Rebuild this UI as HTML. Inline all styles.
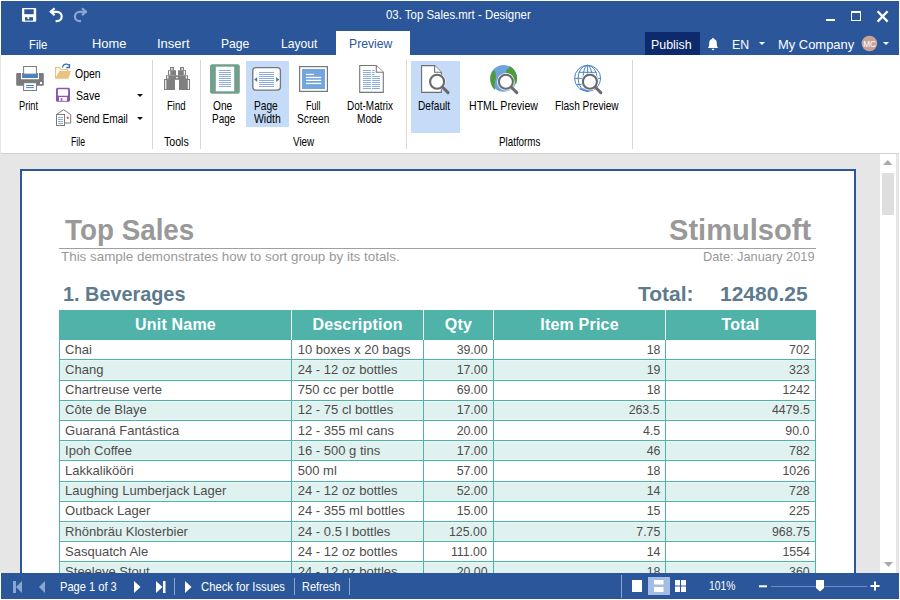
<!DOCTYPE html>
<html><head><meta charset="utf-8">
<style>
*{margin:0;padding:0;box-sizing:border-box}
html,body{width:900px;height:600px;overflow:hidden;background:#fff;font-family:"Liberation Sans",sans-serif;position:relative}
.a{position:absolute}
.tx{position:absolute;white-space:nowrap;transform-origin:0 0;display:inline-block}
svg{position:absolute;overflow:visible}
</style></head><body>
<!-- header -->
<div class="a" style="left:1px;top:1px;width:898px;height:54px;background:#2b579a"></div>
<div class="a" style="left:336px;top:31px;width:74px;height:25px;background:#fff"></div>
<div class="a" style="left:645px;top:32px;width:55px;height:23px;background:#0c2a6c"></div>
<!-- quick access -->
<svg style="left:0;top:0" width="900" height="30">
 <rect x="22" y="8" width="14.2" height="13.8" rx="1" fill="#fff"/>
 <rect x="24.3" y="9.3" width="9.4" height="4.9" fill="#2b579a"/>
 <rect x="25" y="17.2" width="8" height="3.4" fill="#2b579a"/>
 <rect x="27.4" y="17.2" width="1.8" height="1.9" fill="#fff"/>
 <path d="M50.2 11.8H57A4.7 4.7 0 0 1 57 21.2H55.6" fill="none" stroke="#fff" stroke-width="2.2"/>
 <path d="M54.6 8.3L50.8 11.8L54.6 15.3" fill="none" stroke="#fff" stroke-width="2.2"/>
 <path d="M86.8 11.8H79.6A4.7 4.7 0 0 0 79.6 21.2H81" fill="none" stroke="#8ba6d0" stroke-width="2.2"/>
 <path d="M82 8.3L85.8 11.8L82 15.3" fill="none" stroke="#8ba6d0" stroke-width="2.2"/>
 <!-- window controls -->
 <rect x="826" y="19" width="9" height="2" fill="#fff"/>
 <rect x="851.5" y="11.5" width="9" height="9" fill="none" stroke="#fff" stroke-width="1"/>
 <rect x="851" y="11" width="10" height="2" fill="#fff"/>
 <path d="M877.6 11.2l10 10.4M887.6 11.2l-10 10.4" stroke="#fff" stroke-width="2.3"/>
</svg>
<!-- tab row right icons -->
<svg style="left:0;top:0" width="900" height="60">
 <path d="M707.9 47.9H718.1C716.9 46.6 716.8 45 716.8 43.2C716.8 40.6 715.6 39.2 714 38.9L713.6 37.9H712.4L712 38.9C710.4 39.2 709.2 40.6 709.2 43.2C709.2 45 709.1 46.6 707.9 47.9Z" fill="#fff"/>
 <rect x="711.9" y="48.8" width="2.2" height="1.3" fill="#fff"/>
 <path d="M759 42h6l-3 3z" fill="#fff"/>
 <circle cx="869.4" cy="43.5" r="7.8" fill="#c8a298"/>
 <text x="869.6" y="46.9" font-size="8.3" fill="#fff" text-anchor="middle" font-family="Liberation Sans">MC</text>
 <path d="M883 42h6l-3 3z" fill="#fff"/>
</svg>
<!-- ribbon -->
<div class="a" style="left:0px;top:55px;width:1px;height:518px;background:#e6e6e6"></div>
<div class="a" style="left:1px;top:55px;width:898px;height:99px;background:#fff;border-bottom:1px solid #d2d2d2"></div>
<div class="a" style="left:152px;top:60px;width:1px;height:89px;background:#d8d8d8"></div>
<div class="a" style="left:200px;top:60px;width:1px;height:89px;background:#d8d8d8"></div>
<div class="a" style="left:406px;top:60px;width:1px;height:89px;background:#d8d8d8"></div>
<div class="a" style="left:632px;top:60px;width:1px;height:89px;background:#d8d8d8"></div>
<div class="a" style="left:246px;top:61px;width:43px;height:66px;background:#c5dbf7"></div>
<div class="a" style="left:411px;top:61px;width:49px;height:72px;background:#c5dbf7"></div>
<svg style="left:0;top:0" width="900" height="160">
 <!-- print -->
 <path d="M17.2 73h3.8v6.2h18v-6.2h3.8a1 1 0 0 1 1 1v10.8a1 1 0 0 1-1 1h-25.6a1 1 0 0 1-1-1v-10.8a1 1 0 0 1 1-1z" fill="#7b7b7b"/>
 <rect x="22.1" y="73" width="15.8" height="5" fill="#4a80c4"/>
 <rect x="23.6" y="66.5" width="12.8" height="7.6" fill="#fff" stroke="#7b7b7b"/>
 <rect x="40" y="82" width="2" height="2" fill="#fff"/>
 <rect x="23.6" y="82.7" width="12.8" height="7.8" fill="#fff" stroke="#7b7b7b"/>
 <rect x="26.1" y="85" width="7.8" height="1" fill="#4a80c4"/>
 <rect x="26.1" y="87.1" width="7.8" height="1" fill="#4a80c4"/>
 <!-- open folder -->
 <path d="M55.6 78.6v-11h4l1.6 1.9h6.4v2" fill="#fff" stroke="#e8c27f" stroke-width="1.1"/>
 <path d="M59.2 71h11.8l-2.6 7.8h-13.2z" fill="#ebc37f"/>
 <path d="M62.4 67.6c0.5-2.5 2.5-3.6 4.3-3.4 1 .1 1.8.6 2.3 1.2" fill="none" stroke="#2f6db5" stroke-width="1.2"/>
 <path d="M69.5 64v3.5h-3.2" fill="none" stroke="#2f6db5" stroke-width="1.3"/>
 <!-- save purple -->
 <rect x="56" y="87.8" width="14" height="14" rx="1.6" fill="#8b55b2"/>
 <rect x="57.9" y="89.2" width="10.2" height="6.5" rx="0.8" fill="#fff"/>
 <rect x="59" y="97" width="8" height="3.8" fill="#fff"/>
 <rect x="60.8" y="98.1" width="1.5" height="2.7" fill="#8b55b2"/>
 <path d="M137 94h6l-3 3z" fill="#111"/>
 <path d="M137 117h6l-3 3z" fill="#111"/>
 <!-- send email -->
 <path d="M56.5 114.5l7-4.8 7.2 4.8v8.5h-14.2z" fill="#fff" stroke="#7b7b7b"/>
 <rect x="56.5" y="114.5" width="8" height="11" fill="#fff" stroke="#7b7b7b"/>
 <g fill="#8fb0dc"><rect x="58" y="117" width="5" height="1"/><rect x="58" y="119" width="5" height="1"/><rect x="58" y="121" width="5" height="1"/><rect x="58" y="123" width="5" height="1"/></g>
 <rect x="66.8" y="116.8" width="1.8" height="2" fill="#e0402a"/>
 <!-- binoculars -->
 <g fill="#808080">
  <rect x="170" y="67" width="4" height="3.3"/><rect x="168" y="70.2" width="8" height="5.2"/><rect x="166" y="75.3" width="10" height="3.8"/><rect x="164" y="79" width="11" height="11"/>
  <rect x="175" y="75.3" width="4.2" height="4.5"/>
  <rect x="180" y="67" width="4" height="3.3"/><rect x="178" y="70.2" width="8" height="5.2"/><rect x="178" y="75.3" width="10" height="3.8"/><rect x="179" y="79" width="11" height="11"/>
 </g>
 <g fill="#fff">
  <rect x="171.3" y="68" width="1.2" height="2"/><rect x="169.2" y="71" width="1.1" height="3.8"/><rect x="167.2" y="76" width="1.1" height="2.6"/><rect x="165.2" y="80" width="1.1" height="9"/>
  <rect x="176" y="77.2" width="2" height="1"/>
  <rect x="181.6" y="68" width="1.2" height="2"/><rect x="183.8" y="71" width="1.1" height="3.8"/><rect x="185.8" y="76" width="1.1" height="2.6"/><rect x="187.8" y="80" width="1.1" height="9"/>
 </g>
 <!-- one page -->
 <rect x="210" y="64.2" width="29.8" height="29.6" rx="2" fill="#72a08d"/>
 <rect x="215.8" y="66.7" width="18.4" height="24.6" fill="#fff"/>
 <g fill="#8aaed9"><rect x="219" y="70" width="12" height="1"/><rect x="219" y="72" width="12" height="1"/><rect x="219" y="74" width="12" height="1"/><rect x="219" y="76" width="12" height="1"/><rect x="219" y="78" width="12" height="1"/><rect x="219" y="80" width="12" height="1"/><rect x="219" y="82" width="12" height="1"/><rect x="219" y="84" width="12" height="1"/><rect x="219" y="86" width="12" height="1"/></g>
 <!-- page width -->
 <rect x="252.8" y="67.6" width="27.6" height="22.5" rx="3" fill="#fff" stroke="#777" stroke-width="1.3"/>
 <g fill="#8aaed9"><rect x="259" y="72" width="15" height="1"/><rect x="259" y="74" width="15" height="1"/><rect x="259" y="76" width="15" height="1"/><rect x="259" y="78" width="15" height="1"/><rect x="259" y="80" width="15" height="1"/><rect x="259" y="82" width="15" height="1"/><rect x="259" y="84" width="15" height="1"/><rect x="259" y="86" width="15" height="1"/></g>
 <path d="M254.2 79.6l3-2.4v4.8z" fill="#3a75bb"/><path d="M279.2 79.6l-3-2.4v4.8z" fill="#3a75bb"/>
 <!-- full screen -->
 <rect x="299.6" y="66.6" width="27.8" height="24.8" fill="#fff" stroke="#777" stroke-width="1.2"/>
 <rect x="302" y="69" width="23" height="20" fill="#74a5dc"/>
 <g fill="#fff"><rect x="306" y="73.8" width="8" height="1.3"/><rect x="306" y="76.8" width="15.2" height="1.3"/><rect x="306" y="79.7" width="15.2" height="1.3"/><rect x="306" y="82.8" width="15.2" height="1.3"/></g>
 <!-- dot matrix -->
 <path d="M359.7 65.5h16.6l7 6.7v20.2h-23.6z" fill="#fff" stroke="#777" stroke-width="1.1"/>
 <path d="M376.3 65.5v6.7h7" fill="#fff" stroke="#777" stroke-width="1.1"/>
 <g fill="#8aaed9">
  <rect x="363" y="70" width="8" height="1"/><rect x="363" y="72" width="8" height="1"/><rect x="363" y="74" width="8" height="1"/><rect x="363" y="76" width="8" height="1"/><rect x="363" y="78" width="8" height="1"/><rect x="363" y="80" width="8" height="1"/><rect x="363" y="82" width="8" height="1"/><rect x="363" y="84" width="8" height="1"/><rect x="363" y="86" width="8" height="1"/><rect x="363" y="88" width="8" height="1"/>
  <rect x="372" y="70" width="2.5" height="1"/><rect x="372" y="72" width="2.5" height="1"/><rect x="372" y="74" width="2.5" height="1"/><rect x="372" y="76" width="8" height="1"/><rect x="372" y="78" width="8" height="1"/><rect x="372" y="80" width="8" height="1"/><rect x="372" y="82" width="8" height="1"/><rect x="372" y="84" width="8" height="1"/><rect x="372" y="86" width="8" height="1"/><rect x="372" y="88" width="8" height="1"/>
 </g>
 <!-- default -->
 <path d="M421.6 65.6h13l6.7 6.7v20.1h-19.7z" fill="#fff" stroke="#6e6e6e" stroke-width="1.1"/>
 <path d="M434.6 65.6v6.7h6.7" fill="#fff" stroke="#6e6e6e" stroke-width="1.1"/>
 <circle cx="437.1" cy="81.8" r="8.6" fill="#fff"/>
 <circle cx="437.1" cy="81.8" r="7" fill="#fff" stroke="#6a6a6a" stroke-width="2.1"/>
 <path d="M442.6 87.3l5.4 5.3" stroke="#6a6a6a" stroke-width="3" stroke-linecap="round"/>
 <!-- html preview -->
 <circle cx="503.6" cy="78.3" r="13.4" fill="#6ea4dc"/>
 <path d="M493.5 70 C491 73 490.2 77 490.3 80 C490.8 85 492.5 88 495 90 C495.5 87 494 85 495 82 C496 79 496.5 75 495 71.5z" fill="#4f9b3b"/>
 <path d="M509.5 66.2 C512.5 67.5 515.5 70.5 517 76 C517.2 80 516.8 82 516 84 C514 82 511 80.5 509 79.5 C507.5 77 509 74 506.5 73 C506 71 506 69.5 507.5 69 C509 68.5 509.8 67.5 509.5 66.2z" fill="#4f9b3b"/>
 <circle cx="505.9" cy="81.8" r="8.8" fill="#fff"/>
 <circle cx="505.9" cy="81.8" r="7" fill="#fff" stroke="#6a6a6a" stroke-width="2.1"/>
 <path d="M511.4 87.3l5.4 5.3" stroke="#6a6a6a" stroke-width="3" stroke-linecap="round"/>
 <!-- flash preview -->
 <g fill="none" stroke="#4a84c4" stroke-width="1">
 <circle cx="587.6" cy="78.3" r="13"/>
 <ellipse cx="587.6" cy="78.3" rx="4.5" ry="13"/>
 <ellipse cx="587.6" cy="78.3" rx="9.5" ry="13"/>
 <path d="M587.6 65.3v26M574.6 78.3h26M578.5 72.3h18.2M576.5 84.4h22M580 89.1h15"/>
 </g>
 <circle cx="589.9" cy="81.8" r="8.8" fill="#fff"/>
 <circle cx="589.9" cy="81.8" r="7" fill="#fff" stroke="#6a6a6a" stroke-width="2.1"/>
 <path d="M595.4 87.3l5.4 5.3" stroke="#6a6a6a" stroke-width="3" stroke-linecap="round"/>
</svg>
<!-- gray area -->
<div class="a" style="left:1px;top:154px;width:898px;height:419px;background:#e6e6e6"></div>
<!-- scrollbar -->
<div class="a" style="left:880px;top:154px;width:16px;height:419px;background:#fff"></div>
<div class="a" style="left:882px;top:173px;width:12px;height:42px;background:#dedede"></div>
<svg style="left:0;top:0" width="900" height="600">
 <path d="M883 165h9.5l-4.75-5z" fill="#aaa"/>
 <path d="M884 562h9l-4.5 5z" fill="#aaa"/>
</svg>
<!-- page -->
<div class="a" style="left:20px;top:169px;width:836px;height:420px;background:#fff;border:2px solid #2b579a;border-bottom:none"></div>
<div class="a" style="left:59px;top:248px;width:757px;height:1px;background:#a0a0a0"></div>
<div class="a" style="left:59px;top:310px;width:757px;height:30px;background:#4fb3a9"></div>
<div class="a" style="left:291px;top:310px;width:1px;height:30px;background:#fff"></div>
<div class="a" style="left:423px;top:310px;width:1px;height:30px;background:#fff"></div>
<div class="a" style="left:493px;top:310px;width:1px;height:30px;background:#fff"></div>
<div class="a" style="left:665px;top:310px;width:1px;height:30px;background:#fff"></div>
<div class="a" style="left:60px;width:231px;top:316.50px;font-size:16px;line-height:16px;font-weight:bold;color:#fff;text-align:center;white-space:nowrap;letter-spacing:0.2px">Unit Name</div>
<div class="a" style="left:292px;width:131px;top:316.50px;font-size:16px;line-height:16px;font-weight:bold;color:#fff;text-align:center;white-space:nowrap;letter-spacing:0.2px">Description</div>
<div class="a" style="left:424px;width:69px;top:316.50px;font-size:16px;line-height:16px;font-weight:bold;color:#fff;text-align:center;white-space:nowrap;letter-spacing:0.2px">Qty</div>
<div class="a" style="left:494px;width:171px;top:316.50px;font-size:16px;line-height:16px;font-weight:bold;color:#fff;text-align:center;white-space:nowrap;letter-spacing:0.2px">Item Price</div>
<div class="a" style="left:666px;width:149px;top:316.50px;font-size:16px;line-height:16px;font-weight:bold;color:#fff;text-align:center;white-space:nowrap;letter-spacing:0.2px">Total</div>
<div class="a" style="left:59px;top:340px;width:757px;height:20px;background:#fff;border-bottom:1px solid #4fb3a9"></div>
<div class="a" style="left:59px;top:360px;width:757px;height:21px;background:#e0f2f0;border-bottom:1px solid #4fb3a9"></div>
<div class="a" style="left:59px;top:360px;width:757px;height:1px;background:#eaf6f5"></div>
<div class="a" style="left:59px;top:379px;width:757px;height:1px;background:#eaf6f5"></div>
<div class="a" style="left:59px;top:381px;width:757px;height:20px;background:#fff;border-bottom:1px solid #4fb3a9"></div>
<div class="a" style="left:59px;top:401px;width:757px;height:20px;background:#e0f2f0;border-bottom:1px solid #4fb3a9"></div>
<div class="a" style="left:59px;top:401px;width:757px;height:1px;background:#eaf6f5"></div>
<div class="a" style="left:59px;top:419px;width:757px;height:1px;background:#eaf6f5"></div>
<div class="a" style="left:59px;top:421px;width:757px;height:20px;background:#fff;border-bottom:1px solid #4fb3a9"></div>
<div class="a" style="left:59px;top:441px;width:757px;height:20px;background:#e0f2f0;border-bottom:1px solid #4fb3a9"></div>
<div class="a" style="left:59px;top:441px;width:757px;height:1px;background:#eaf6f5"></div>
<div class="a" style="left:59px;top:459px;width:757px;height:1px;background:#eaf6f5"></div>
<div class="a" style="left:59px;top:461px;width:757px;height:21px;background:#fff;border-bottom:1px solid #4fb3a9"></div>
<div class="a" style="left:59px;top:482px;width:757px;height:20px;background:#e0f2f0;border-bottom:1px solid #4fb3a9"></div>
<div class="a" style="left:59px;top:482px;width:757px;height:1px;background:#eaf6f5"></div>
<div class="a" style="left:59px;top:500px;width:757px;height:1px;background:#eaf6f5"></div>
<div class="a" style="left:59px;top:502px;width:757px;height:20px;background:#fff;border-bottom:1px solid #4fb3a9"></div>
<div class="a" style="left:59px;top:522px;width:757px;height:20px;background:#e0f2f0;border-bottom:1px solid #4fb3a9"></div>
<div class="a" style="left:59px;top:522px;width:757px;height:1px;background:#eaf6f5"></div>
<div class="a" style="left:59px;top:540px;width:757px;height:1px;background:#eaf6f5"></div>
<div class="a" style="left:59px;top:542px;width:757px;height:20px;background:#fff;border-bottom:1px solid #4fb3a9"></div>
<div class="a" style="left:59px;top:562px;width:757px;height:20px;background:#e0f2f0;border-bottom:1px solid #4fb3a9"></div>
<div class="a" style="left:59px;top:562px;width:757px;height:1px;background:#eaf6f5"></div>
<div class="a" style="left:59px;top:580px;width:757px;height:1px;background:#eaf6f5"></div>
<div class="a" style="left:59px;top:340px;width:1px;height:240px;background:#4fb3a9"></div>
<div class="a" style="left:291px;top:340px;width:1px;height:240px;background:#4fb3a9"></div>
<div class="a" style="left:423px;top:340px;width:1px;height:240px;background:#4fb3a9"></div>
<div class="a" style="left:493px;top:340px;width:1px;height:240px;background:#4fb3a9"></div>
<div class="a" style="left:665px;top:340px;width:1px;height:240px;background:#4fb3a9"></div>
<div class="a" style="left:815px;top:340px;width:1px;height:240px;background:#4fb3a9"></div>
<div class="a" style="left:65.1px;top:342.70px;font-size:13px;line-height:13px;color:#4d4d4d;white-space:nowrap">Chai</div>
<div class="a" style="left:297.8px;top:342.70px;font-size:13px;line-height:13px;color:#4d4d4d;white-space:nowrap">10 boxes x 20 bags</div>
<div class="a" style="left:287.1px;width:200px;text-align:right;top:342.70px;font-size:13px;line-height:13px;color:#4d4d4d;white-space:nowrap"><span style="display:inline-block;transform:scaleX(0.95);transform-origin:100% 0">39.00</span></div>
<div class="a" style="left:460.0px;width:200px;text-align:right;top:342.70px;font-size:13px;line-height:13px;color:#4d4d4d;white-space:nowrap"><span style="display:inline-block;transform:scaleX(0.95);transform-origin:100% 0">18</span></div>
<div class="a" style="left:609.5px;width:200px;text-align:right;top:342.70px;font-size:13px;line-height:13px;color:#4d4d4d;white-space:nowrap"><span style="display:inline-block;transform:scaleX(0.95);transform-origin:100% 0">702</span></div>
<div class="a" style="left:65.1px;top:362.90px;font-size:13px;line-height:13px;color:#4d4d4d;white-space:nowrap">Chang</div>
<div class="a" style="left:297.8px;top:362.90px;font-size:13px;line-height:13px;color:#4d4d4d;white-space:nowrap">24 - 12 oz bottles</div>
<div class="a" style="left:287.1px;width:200px;text-align:right;top:362.90px;font-size:13px;line-height:13px;color:#4d4d4d;white-space:nowrap"><span style="display:inline-block;transform:scaleX(0.95);transform-origin:100% 0">17.00</span></div>
<div class="a" style="left:460.0px;width:200px;text-align:right;top:362.90px;font-size:13px;line-height:13px;color:#4d4d4d;white-space:nowrap"><span style="display:inline-block;transform:scaleX(0.95);transform-origin:100% 0">19</span></div>
<div class="a" style="left:609.5px;width:200px;text-align:right;top:362.90px;font-size:13px;line-height:13px;color:#4d4d4d;white-space:nowrap"><span style="display:inline-block;transform:scaleX(0.95);transform-origin:100% 0">323</span></div>
<div class="a" style="left:65.1px;top:383.10px;font-size:13px;line-height:13px;color:#4d4d4d;white-space:nowrap">Chartreuse verte</div>
<div class="a" style="left:297.8px;top:383.10px;font-size:13px;line-height:13px;color:#4d4d4d;white-space:nowrap">750 cc per bottle</div>
<div class="a" style="left:287.1px;width:200px;text-align:right;top:383.10px;font-size:13px;line-height:13px;color:#4d4d4d;white-space:nowrap"><span style="display:inline-block;transform:scaleX(0.95);transform-origin:100% 0">69.00</span></div>
<div class="a" style="left:460.0px;width:200px;text-align:right;top:383.10px;font-size:13px;line-height:13px;color:#4d4d4d;white-space:nowrap"><span style="display:inline-block;transform:scaleX(0.95);transform-origin:100% 0">18</span></div>
<div class="a" style="left:609.5px;width:200px;text-align:right;top:383.10px;font-size:13px;line-height:13px;color:#4d4d4d;white-space:nowrap"><span style="display:inline-block;transform:scaleX(0.95);transform-origin:100% 0">1242</span></div>
<div class="a" style="left:65.1px;top:403.30px;font-size:13px;line-height:13px;color:#4d4d4d;white-space:nowrap">Côte de Blaye</div>
<div class="a" style="left:297.8px;top:403.30px;font-size:13px;line-height:13px;color:#4d4d4d;white-space:nowrap">12 - 75 cl bottles</div>
<div class="a" style="left:287.1px;width:200px;text-align:right;top:403.30px;font-size:13px;line-height:13px;color:#4d4d4d;white-space:nowrap"><span style="display:inline-block;transform:scaleX(0.95);transform-origin:100% 0">17.00</span></div>
<div class="a" style="left:460.0px;width:200px;text-align:right;top:403.30px;font-size:13px;line-height:13px;color:#4d4d4d;white-space:nowrap"><span style="display:inline-block;transform:scaleX(0.95);transform-origin:100% 0">263.5</span></div>
<div class="a" style="left:609.5px;width:200px;text-align:right;top:403.30px;font-size:13px;line-height:13px;color:#4d4d4d;white-space:nowrap"><span style="display:inline-block;transform:scaleX(0.95);transform-origin:100% 0">4479.5</span></div>
<div class="a" style="left:65.1px;top:423.50px;font-size:13px;line-height:13px;color:#4d4d4d;white-space:nowrap">Guaraná Fantástica</div>
<div class="a" style="left:297.8px;top:423.50px;font-size:13px;line-height:13px;color:#4d4d4d;white-space:nowrap">12 - 355 ml cans</div>
<div class="a" style="left:287.1px;width:200px;text-align:right;top:423.50px;font-size:13px;line-height:13px;color:#4d4d4d;white-space:nowrap"><span style="display:inline-block;transform:scaleX(0.95);transform-origin:100% 0">20.00</span></div>
<div class="a" style="left:460.0px;width:200px;text-align:right;top:423.50px;font-size:13px;line-height:13px;color:#4d4d4d;white-space:nowrap"><span style="display:inline-block;transform:scaleX(0.95);transform-origin:100% 0">4.5</span></div>
<div class="a" style="left:609.5px;width:200px;text-align:right;top:423.50px;font-size:13px;line-height:13px;color:#4d4d4d;white-space:nowrap"><span style="display:inline-block;transform:scaleX(0.95);transform-origin:100% 0">90.0</span></div>
<div class="a" style="left:65.1px;top:443.70px;font-size:13px;line-height:13px;color:#4d4d4d;white-space:nowrap">Ipoh Coffee</div>
<div class="a" style="left:297.8px;top:443.70px;font-size:13px;line-height:13px;color:#4d4d4d;white-space:nowrap">16 - 500 g tins</div>
<div class="a" style="left:287.1px;width:200px;text-align:right;top:443.70px;font-size:13px;line-height:13px;color:#4d4d4d;white-space:nowrap"><span style="display:inline-block;transform:scaleX(0.95);transform-origin:100% 0">17.00</span></div>
<div class="a" style="left:460.0px;width:200px;text-align:right;top:443.70px;font-size:13px;line-height:13px;color:#4d4d4d;white-space:nowrap"><span style="display:inline-block;transform:scaleX(0.95);transform-origin:100% 0">46</span></div>
<div class="a" style="left:609.5px;width:200px;text-align:right;top:443.70px;font-size:13px;line-height:13px;color:#4d4d4d;white-space:nowrap"><span style="display:inline-block;transform:scaleX(0.95);transform-origin:100% 0">782</span></div>
<div class="a" style="left:65.1px;top:463.90px;font-size:13px;line-height:13px;color:#4d4d4d;white-space:nowrap">Lakkalikööri</div>
<div class="a" style="left:297.8px;top:463.90px;font-size:13px;line-height:13px;color:#4d4d4d;white-space:nowrap">500 ml</div>
<div class="a" style="left:287.1px;width:200px;text-align:right;top:463.90px;font-size:13px;line-height:13px;color:#4d4d4d;white-space:nowrap"><span style="display:inline-block;transform:scaleX(0.95);transform-origin:100% 0">57.00</span></div>
<div class="a" style="left:460.0px;width:200px;text-align:right;top:463.90px;font-size:13px;line-height:13px;color:#4d4d4d;white-space:nowrap"><span style="display:inline-block;transform:scaleX(0.95);transform-origin:100% 0">18</span></div>
<div class="a" style="left:609.5px;width:200px;text-align:right;top:463.90px;font-size:13px;line-height:13px;color:#4d4d4d;white-space:nowrap"><span style="display:inline-block;transform:scaleX(0.95);transform-origin:100% 0">1026</span></div>
<div class="a" style="left:65.1px;top:484.10px;font-size:13px;line-height:13px;color:#4d4d4d;white-space:nowrap">Laughing Lumberjack Lager</div>
<div class="a" style="left:297.8px;top:484.10px;font-size:13px;line-height:13px;color:#4d4d4d;white-space:nowrap">24 - 12 oz bottles</div>
<div class="a" style="left:287.1px;width:200px;text-align:right;top:484.10px;font-size:13px;line-height:13px;color:#4d4d4d;white-space:nowrap"><span style="display:inline-block;transform:scaleX(0.95);transform-origin:100% 0">52.00</span></div>
<div class="a" style="left:460.0px;width:200px;text-align:right;top:484.10px;font-size:13px;line-height:13px;color:#4d4d4d;white-space:nowrap"><span style="display:inline-block;transform:scaleX(0.95);transform-origin:100% 0">14</span></div>
<div class="a" style="left:609.5px;width:200px;text-align:right;top:484.10px;font-size:13px;line-height:13px;color:#4d4d4d;white-space:nowrap"><span style="display:inline-block;transform:scaleX(0.95);transform-origin:100% 0">728</span></div>
<div class="a" style="left:65.1px;top:504.30px;font-size:13px;line-height:13px;color:#4d4d4d;white-space:nowrap">Outback Lager</div>
<div class="a" style="left:297.8px;top:504.30px;font-size:13px;line-height:13px;color:#4d4d4d;white-space:nowrap">24 - 355 ml bottles</div>
<div class="a" style="left:287.1px;width:200px;text-align:right;top:504.30px;font-size:13px;line-height:13px;color:#4d4d4d;white-space:nowrap"><span style="display:inline-block;transform:scaleX(0.95);transform-origin:100% 0">15.00</span></div>
<div class="a" style="left:460.0px;width:200px;text-align:right;top:504.30px;font-size:13px;line-height:13px;color:#4d4d4d;white-space:nowrap"><span style="display:inline-block;transform:scaleX(0.95);transform-origin:100% 0">15</span></div>
<div class="a" style="left:609.5px;width:200px;text-align:right;top:504.30px;font-size:13px;line-height:13px;color:#4d4d4d;white-space:nowrap"><span style="display:inline-block;transform:scaleX(0.95);transform-origin:100% 0">225</span></div>
<div class="a" style="left:65.1px;top:524.50px;font-size:13px;line-height:13px;color:#4d4d4d;white-space:nowrap">Rhönbräu Klosterbier</div>
<div class="a" style="left:297.8px;top:524.50px;font-size:13px;line-height:13px;color:#4d4d4d;white-space:nowrap">24 - 0.5 l bottles</div>
<div class="a" style="left:287.1px;width:200px;text-align:right;top:524.50px;font-size:13px;line-height:13px;color:#4d4d4d;white-space:nowrap"><span style="display:inline-block;transform:scaleX(0.95);transform-origin:100% 0">125.00</span></div>
<div class="a" style="left:460.0px;width:200px;text-align:right;top:524.50px;font-size:13px;line-height:13px;color:#4d4d4d;white-space:nowrap"><span style="display:inline-block;transform:scaleX(0.95);transform-origin:100% 0">7.75</span></div>
<div class="a" style="left:609.5px;width:200px;text-align:right;top:524.50px;font-size:13px;line-height:13px;color:#4d4d4d;white-space:nowrap"><span style="display:inline-block;transform:scaleX(0.95);transform-origin:100% 0">968.75</span></div>
<div class="a" style="left:65.1px;top:544.70px;font-size:13px;line-height:13px;color:#4d4d4d;white-space:nowrap">Sasquatch Ale</div>
<div class="a" style="left:297.8px;top:544.70px;font-size:13px;line-height:13px;color:#4d4d4d;white-space:nowrap">24 - 12 oz bottles</div>
<div class="a" style="left:287.1px;width:200px;text-align:right;top:544.70px;font-size:13px;line-height:13px;color:#4d4d4d;white-space:nowrap"><span style="display:inline-block;transform:scaleX(0.95);transform-origin:100% 0">111.00</span></div>
<div class="a" style="left:460.0px;width:200px;text-align:right;top:544.70px;font-size:13px;line-height:13px;color:#4d4d4d;white-space:nowrap"><span style="display:inline-block;transform:scaleX(0.95);transform-origin:100% 0">14</span></div>
<div class="a" style="left:609.5px;width:200px;text-align:right;top:544.70px;font-size:13px;line-height:13px;color:#4d4d4d;white-space:nowrap"><span style="display:inline-block;transform:scaleX(0.95);transform-origin:100% 0">1554</span></div>
<div class="a" style="left:65.1px;top:564.90px;font-size:13px;line-height:13px;color:#4d4d4d;white-space:nowrap">Steeleye Stout</div>
<div class="a" style="left:297.8px;top:564.90px;font-size:13px;line-height:13px;color:#4d4d4d;white-space:nowrap">24 - 12 oz bottles</div>
<div class="a" style="left:287.1px;width:200px;text-align:right;top:564.90px;font-size:13px;line-height:13px;color:#4d4d4d;white-space:nowrap"><span style="display:inline-block;transform:scaleX(0.95);transform-origin:100% 0">20.00</span></div>
<div class="a" style="left:460.0px;width:200px;text-align:right;top:564.90px;font-size:13px;line-height:13px;color:#4d4d4d;white-space:nowrap"><span style="display:inline-block;transform:scaleX(0.95);transform-origin:100% 0">18</span></div>
<div class="a" style="left:609.5px;width:200px;text-align:right;top:564.90px;font-size:13px;line-height:13px;color:#4d4d4d;white-space:nowrap"><span style="display:inline-block;transform:scaleX(0.95);transform-origin:100% 0">360</span></div>
<!-- status bar -->
<div class="a" style="left:1px;top:573px;width:898px;height:26px;background:#2b579a"></div>
<div class="a" style="left:648px;top:577px;width:22px;height:18px;background:#a3bde5"></div>
<svg style="left:0;top:0" width="900" height="600">
 <g fill="#8ba6d0"><rect x="13" y="581" width="3" height="12"/><path d="M22 581v12l-6-6z"/><path d="M45 581v12l-6-6z"/></g>
 <g fill="#fff"><path d="M134 581v12l6.5-6z"/><path d="M156 581v12l6.5-6z"/><rect x="163" y="581" width="2.5" height="12"/><path d="M185 581v12l6.5-6z"/></g>
 <g fill="#8ba6d0"><rect x="174" y="578" width="1" height="17"/><rect x="294" y="578" width="1" height="17"/><rect x="349" y="578" width="1" height="17"/><rect x="621" y="575" width="1" height="23"/></g>
 <rect x="632" y="580" width="10" height="12" fill="#fff"/>
 <rect x="654" y="580" width="9.5" height="4.5" fill="#fff"/><rect x="654" y="587" width="9.5" height="5" fill="#fff"/>
 <g fill="#fff"><rect x="675" y="580" width="5" height="5.5"/><rect x="681" y="580" width="5" height="5.5"/><rect x="675" y="586.5" width="5" height="5.5"/><rect x="681" y="586.5" width="5" height="5.5"/></g>
 <rect x="759" y="585.3" width="8" height="2" fill="#fff"/>
 <rect x="771" y="586" width="96" height="1" fill="#6f8fc2"/>
 <path d="M816 580h8v8l-4 3.5-4-3.5z" fill="#fff"/>
 <rect x="870.5" y="585" width="9" height="2" fill="#fff"/><rect x="874" y="581.5" width="2" height="9" fill="#fff"/>
</svg>
<span id="t_title" class="tx" style="left:385.60px;top:8.65px;font-size:12.5px;line-height:12.5px;font-weight:normal;color:#fff;transform:scaleX(0.9151)">03. Top Sales.mrt - Designer</span>
<span id="t_file" class="tx" style="left:28.80px;top:38.00px;font-size:13px;line-height:13px;font-weight:normal;color:#fff;transform:scaleX(0.8695)">File</span>
<span id="t_home" class="tx" style="left:92.00px;top:36.60px;font-size:13px;line-height:13px;font-weight:normal;color:#fff;transform:scaleX(0.9923)">Home</span>
<span id="t_insert" class="tx" style="left:157.00px;top:36.60px;font-size:13px;line-height:13px;font-weight:normal;color:#fff;transform:scaleX(1.0000)">Insert</span>
<span id="t_page" class="tx" style="left:221.00px;top:37.20px;font-size:13px;line-height:13px;font-weight:normal;color:#fff;transform:scaleX(0.9333)">Page</span>
<span id="t_layout" class="tx" style="left:281.40px;top:37.20px;font-size:13px;line-height:13px;font-weight:normal;color:#fff;transform:scaleX(0.9319)">Layout</span>
<span id="t_preview" class="tx" style="left:349.00px;top:37.20px;font-size:13px;line-height:13px;font-weight:normal;color:#2b579a;transform:scaleX(0.9395)">Preview</span>
<span id="t_publish" class="tx" style="left:651.00px;top:37.70px;font-size:13px;line-height:13px;font-weight:normal;color:#fff;transform:scaleX(0.9535)">Publish</span>
<span id="t_en" class="tx" style="left:732.00px;top:37.70px;font-size:13px;line-height:13px;font-weight:normal;color:#fff;transform:scaleX(0.9444)">EN</span>
<span id="t_company" class="tx" style="left:777.60px;top:37.70px;font-size:13px;line-height:13px;font-weight:normal;color:#fff;transform:scaleX(0.9950)">My Company</span>
<span id="r_print" class="tx" style="left:19.40px;top:100.10px;font-size:12.4px;line-height:12.4px;font-weight:normal;color:#000;transform:scaleX(0.7433)">Print</span>
<span id="r_open" class="tx" style="left:75.20px;top:67.50px;font-size:12.4px;line-height:12.4px;font-weight:normal;color:#000;transform:scaleX(0.8450)">Open</span>
<span id="r_save" class="tx" style="left:76.00px;top:89.70px;font-size:12.4px;line-height:12.4px;font-weight:normal;color:#000;transform:scaleX(0.8533)">Save</span>
<span id="r_send" class="tx" style="left:76.00px;top:112.80px;font-size:12.4px;line-height:12.4px;font-weight:normal;color:#000;transform:scaleX(0.8184)">Send Email</span>
<span id="r_gfile" class="tx" style="left:71.20px;top:136.00px;font-size:12.4px;line-height:12.4px;font-weight:normal;color:#000;transform:scaleX(0.7009)">File</span>
<span id="r_find" class="tx" style="left:166.80px;top:100.10px;font-size:12.4px;line-height:12.4px;font-weight:normal;color:#000;transform:scaleX(0.7709)">Find</span>
<span id="r_tools" class="tx" style="left:164.20px;top:136.00px;font-size:12.4px;line-height:12.4px;font-weight:normal;color:#000;transform:scaleX(0.8557)">Tools</span>
<span id="r_one" class="tx" style="left:213.00px;top:99.80px;font-size:12.4px;line-height:12.4px;font-weight:normal;color:#000;transform:scaleX(0.8180)">One</span>
<span id="r_onepage" class="tx" style="left:212.00px;top:112.80px;font-size:12.4px;line-height:12.4px;font-weight:normal;color:#000;transform:scaleX(0.8026)">Page</span>
<span id="r_pwpage" class="tx" style="left:254.00px;top:99.80px;font-size:12.4px;line-height:12.4px;font-weight:normal;color:#000;transform:scaleX(0.8205)">Page</span>
<span id="r_width" class="tx" style="left:253.60px;top:112.80px;font-size:12.4px;line-height:12.4px;font-weight:normal;color:#000;transform:scaleX(0.8431)">Width</span>
<span id="r_full" class="tx" style="left:306.00px;top:99.70px;font-size:12.4px;line-height:12.4px;font-weight:normal;color:#000;transform:scaleX(0.7324)">Full</span>
<span id="r_screen" class="tx" style="left:297.20px;top:112.90px;font-size:12.4px;line-height:12.4px;font-weight:normal;color:#000;transform:scaleX(0.8238)">Screen</span>
<span id="r_dot" class="tx" style="left:347.20px;top:99.70px;font-size:12.4px;line-height:12.4px;font-weight:normal;color:#000;transform:scaleX(0.8048)">Dot-Matrix</span>
<span id="r_mode" class="tx" style="left:357.20px;top:112.90px;font-size:12.4px;line-height:12.4px;font-weight:normal;color:#000;transform:scaleX(0.8125)">Mode</span>
<span id="r_view" class="tx" style="left:292.80px;top:135.70px;font-size:12.4px;line-height:12.4px;font-weight:normal;color:#000;transform:scaleX(0.7967)">View</span>
<span id="r_default" class="tx" style="left:418.00px;top:99.70px;font-size:12.4px;line-height:12.4px;font-weight:normal;color:#000;transform:scaleX(0.8176)">Default</span>
<span id="r_html" class="tx" style="left:468.80px;top:99.70px;font-size:12.4px;line-height:12.4px;font-weight:normal;color:#000;transform:scaleX(0.8541)">HTML Preview</span>
<span id="r_flash" class="tx" style="left:555.20px;top:99.70px;font-size:12.4px;line-height:12.4px;font-weight:normal;color:#000;transform:scaleX(0.8185)">Flash Preview</span>
<span id="r_platforms" class="tx" style="left:498.80px;top:135.70px;font-size:12.4px;line-height:12.4px;font-weight:normal;color:#000;transform:scaleX(0.7906)">Platforms</span>
<span id="s_page" class="tx" style="left:60.40px;top:580.00px;font-size:13px;line-height:13px;font-weight:normal;color:#fff;transform:scaleX(0.8535)">Page 1 of 3</span>
<span id="s_check" class="tx" style="left:201.40px;top:580.00px;font-size:13px;line-height:13px;font-weight:normal;color:#fff;transform:scaleX(0.8660)">Check for Issues</span>
<span id="s_refresh" class="tx" style="left:302.00px;top:580.00px;font-size:13px;line-height:13px;font-weight:normal;color:#fff;transform:scaleX(0.8405)">Refresh</span>
<span id="s_zoom" class="tx" style="left:709.00px;top:579.30px;font-size:13px;line-height:13px;font-weight:normal;color:#fff;transform:scaleX(0.7941)">101%</span>
<span id="p_title" class="tx" style="left:64.60px;top:215.80px;font-size:29px;line-height:29px;font-weight:bold;color:#999;transform:scaleX(0.9590)">Top Sales</span>
<span id="p_stim" class="tx" style="left:669.00px;top:215.80px;font-size:29px;line-height:29px;font-weight:bold;color:#999;transform:scaleX(1.0026)">Stimulsoft</span>
<span id="p_sub" class="tx" style="left:61.00px;top:250.40px;font-size:13.6px;line-height:13.6px;font-weight:normal;color:#999;transform:scaleX(0.9854)">This sample demonstrates how to sort group by its totals.</span>
<span id="p_date" class="tx" style="left:703.00px;top:250.40px;font-size:13.6px;line-height:13.6px;font-weight:normal;color:#999;transform:scaleX(0.9402)">Date: January 2019</span>
<span id="p_bev" class="tx" style="left:63.40px;top:284.05px;font-size:20.3px;line-height:20.3px;font-weight:bold;color:#5d7b8e;transform:scaleX(0.9782)">1. Beverages</span>
<span id="p_total" class="tx" style="left:637.80px;top:284.35px;font-size:20.3px;line-height:20.3px;font-weight:bold;color:#5d7b8e;transform:scaleX(1.0345)">Total:</span>
<span id="p_sum" class="tx" style="left:719.60px;top:284.35px;font-size:20.3px;line-height:20.3px;font-weight:bold;color:#5d7b8e;transform:scaleX(1.0352)">12480.25</span>
</body></html>
